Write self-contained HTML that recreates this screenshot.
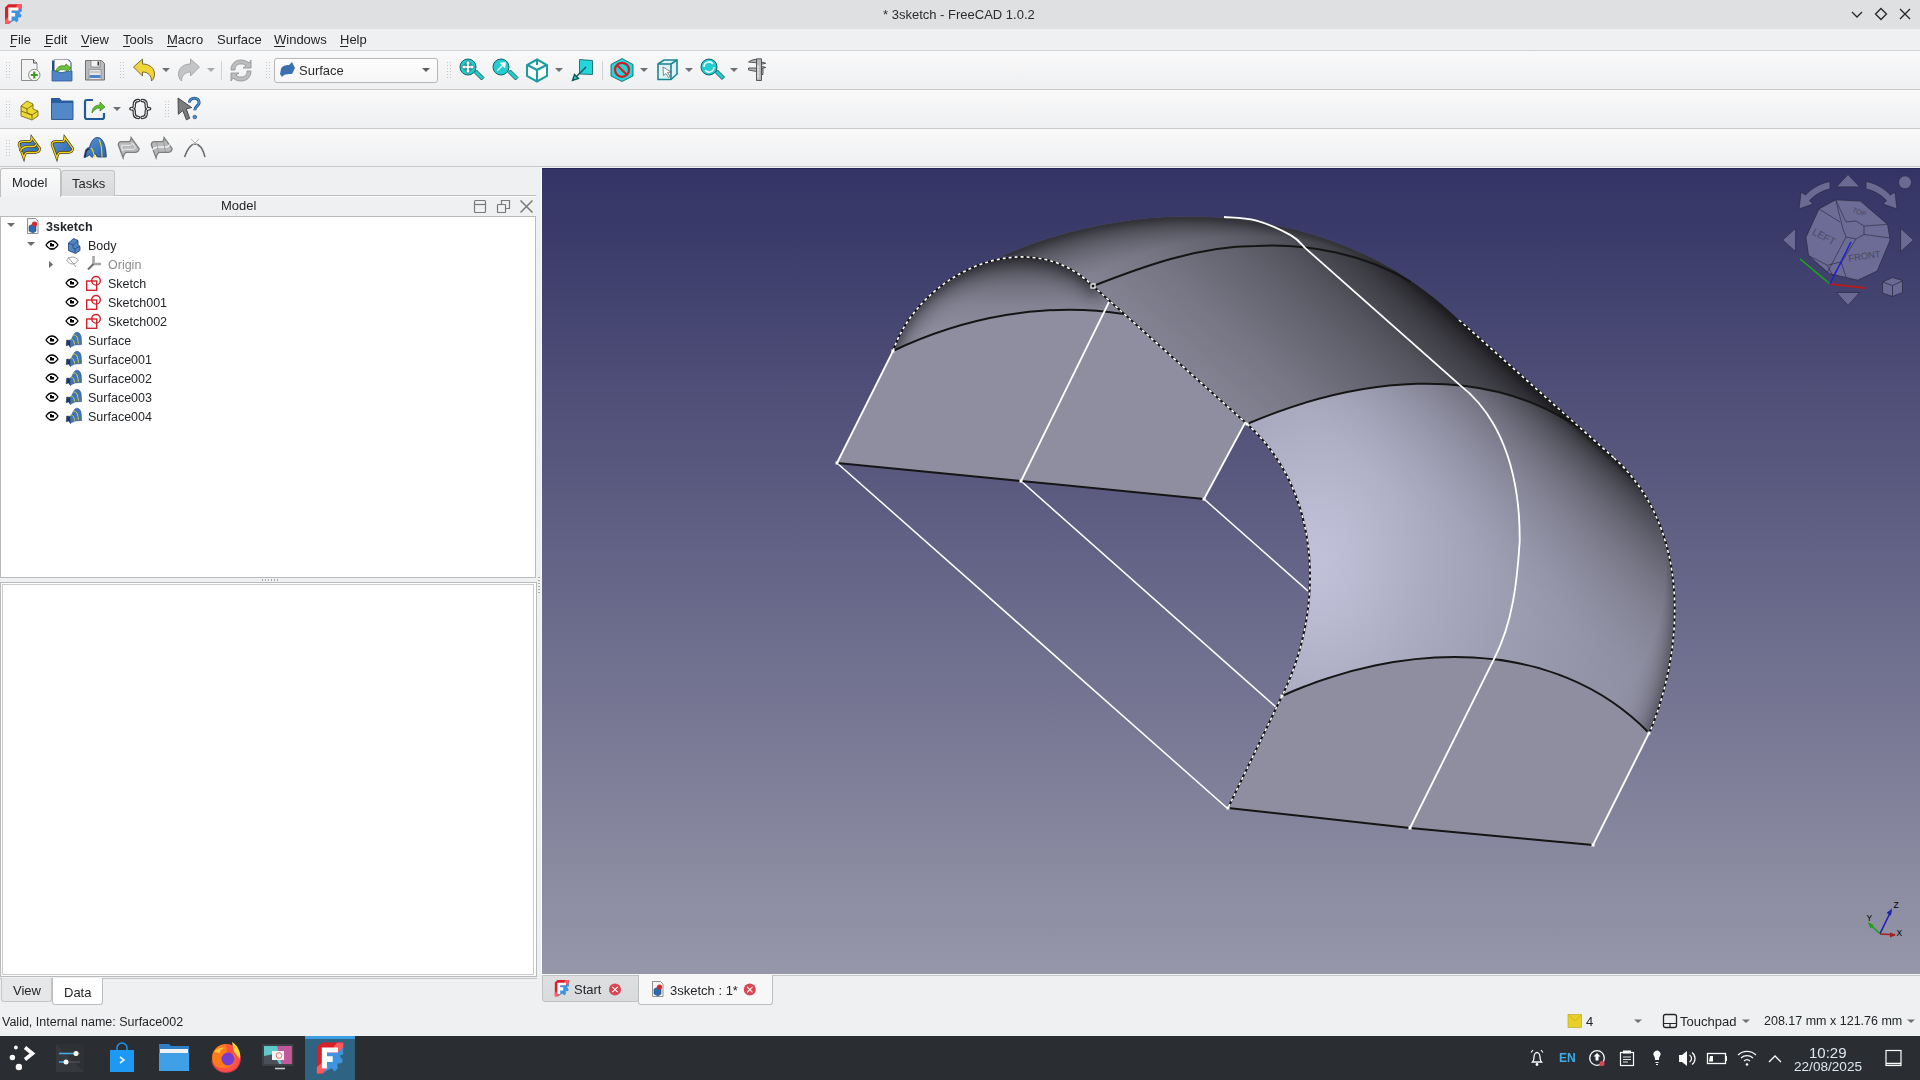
<!DOCTYPE html>
<html><head><meta charset="utf-8">
<style>
*{box-sizing:border-box;margin:0;padding:0}
html,body{width:1920px;height:1080px;overflow:hidden;background:#eff0f1;font-family:"Liberation Sans",sans-serif;font-size:13px;color:#232629}
.a{position:absolute}
.t{position:absolute;white-space:pre;line-height:13px;font-size:13px;will-change:transform}
svg{position:absolute;overflow:visible}
.tb{position:absolute;left:0;width:1920px;background:linear-gradient(#f9f9fa,#eff0f1)}
.hd{position:absolute;width:6px;height:17px;background-image:radial-gradient(circle at 1px 1px,#c6c8ca 0.55px,transparent 0.8px);background-size:3px 3px}
.dd{position:absolute;width:0;height:0;border-left:4px solid transparent;border-right:4px solid transparent;border-top:4px solid #6e7072}
</style></head><body>
<!-- title bar -->
<div class="a" style="left:0;top:0;width:1920px;height:29px;background:#dfe0e2"></div>
<svg width="0" height="0" style="position:absolute"><defs><symbol id="fc" viewBox="0 0 28 32">
 <path d="M0 5.2L5.4 0H27.7V5.3L6.4 32H0z" fill="#d81f2a"/>
 <path d="M17.6 4.7L21.4 0H27.7V5.3L22.1 10z" fill="#ff5a5e"/>
 <path d="M0 25.7L5.4 21V27H10.3L6.4 32H0z" fill="#ff5a5e"/>
 <path d="M10.8 10.3H22.1L27.7 5.2V12L23.8 13.7L27.2 18L26.2 21.3L21.4 22L22.1 26.7L18.6 30L15.8 26.7L12 28.3L6.4 32L10.3 27z" fill="#3d95e0"/>
 <path d="M5.4 5.2H22.1V10.3H10.8V14.3H16.7V20.2H10.8V27H5.4z" fill="#fff"/>
</symbol></defs></svg>
<svg style="left:5px;top:4px" width="17" height="20"><use href="#fc" width="17" height="20"/></svg>
<div class="t" style="left:883px;top:8px;color:#2a2c2e">* 3sketch - FreeCAD 1.0.2</div>
<svg style="left:1850px;top:9px" width="14" height="10"><path d="M2 3l5 5 5-5" stroke="#232629" stroke-width="1.3" fill="none"/></svg>
<svg style="left:1874px;top:7px" width="14" height="14"><path d="M7 1.5l5.5 5.5-5.5 5.5-5.5-5.5z" stroke="#232629" stroke-width="1.3" fill="none"/></svg>
<svg style="left:1898px;top:7px" width="14" height="14"><path d="M2 2l10 10M12 2l-10 10" stroke="#232629" stroke-width="1.3" fill="none"/></svg>
<!-- menu -->
<div class="a" style="left:0;top:29px;width:1920px;height:21px;background:#eff0f1"></div>
<div class="t" style="left:10px;top:33px">File</div>
<div class="t" style="left:45px;top:33px">Edit</div>
<div class="t" style="left:81px;top:33px">View</div>
<div class="t" style="left:123px;top:33px">Tools</div>
<div class="t" style="left:167px;top:33px">Macro</div>
<div class="t" style="left:217px;top:33px">Surface</div>
<div class="t" style="left:274px;top:33px">Windows</div>
<div class="t" style="left:340px;top:33px">Help</div>
<div class="a" style="left:10px;top:46px;width:6px;height:1px;background:#232629"></div>
<div class="a" style="left:44px;top:46px;width:7px;height:1px;background:#232629"></div>
<div class="a" style="left:81px;top:46px;width:8px;height:1px;background:#232629"></div>
<div class="a" style="left:123px;top:46px;width:7px;height:1px;background:#232629"></div>
<div class="a" style="left:167px;top:46px;width:10px;height:1px;background:#232629"></div>
<div class="a" style="left:274px;top:46px;width:11px;height:1px;background:#232629"></div>
<div class="a" style="left:340px;top:46px;width:8px;height:1px;background:#232629"></div>
<!-- toolbars -->
<div class="a" style="left:0;top:50px;width:1920px;height:1px;background:#d1d2d4"></div>
<div class="tb" style="top:51px;height:38px"></div>
<div class="a" style="left:0;top:89px;width:1920px;height:1px;background:#c8c9cb"></div>
<div class="tb" style="top:90px;height:38px"></div>
<div class="a" style="left:0;top:128px;width:1920px;height:1px;background:#c8c9cb"></div>
<div class="tb" style="top:129px;height:37px"></div>
<div class="a" style="left:0;top:166px;width:1920px;height:1px;background:#c8c9cb"></div>
<!-- toolbar handles -->
<svg style="left:0;top:0" width="480" height="170"><g fill="#c3c5c7"><rect x="6" y="62" width="1" height="1"/><rect x="9" y="62" width="1" height="1"/><rect x="6" y="65" width="1" height="1"/><rect x="9" y="65" width="1" height="1"/><rect x="6" y="68" width="1" height="1"/><rect x="9" y="68" width="1" height="1"/><rect x="6" y="71" width="1" height="1"/><rect x="9" y="71" width="1" height="1"/><rect x="6" y="74" width="1" height="1"/><rect x="9" y="74" width="1" height="1"/><rect x="6" y="77" width="1" height="1"/><rect x="9" y="77" width="1" height="1"/><rect x="120" y="62" width="1" height="1"/><rect x="123" y="62" width="1" height="1"/><rect x="120" y="65" width="1" height="1"/><rect x="123" y="65" width="1" height="1"/><rect x="120" y="68" width="1" height="1"/><rect x="123" y="68" width="1" height="1"/><rect x="120" y="71" width="1" height="1"/><rect x="123" y="71" width="1" height="1"/><rect x="120" y="74" width="1" height="1"/><rect x="123" y="74" width="1" height="1"/><rect x="120" y="77" width="1" height="1"/><rect x="123" y="77" width="1" height="1"/><rect x="266" y="62" width="1" height="1"/><rect x="269" y="62" width="1" height="1"/><rect x="266" y="65" width="1" height="1"/><rect x="269" y="65" width="1" height="1"/><rect x="266" y="68" width="1" height="1"/><rect x="269" y="68" width="1" height="1"/><rect x="266" y="71" width="1" height="1"/><rect x="269" y="71" width="1" height="1"/><rect x="266" y="74" width="1" height="1"/><rect x="269" y="74" width="1" height="1"/><rect x="266" y="77" width="1" height="1"/><rect x="269" y="77" width="1" height="1"/><rect x="447" y="62" width="1" height="1"/><rect x="450" y="62" width="1" height="1"/><rect x="447" y="65" width="1" height="1"/><rect x="450" y="65" width="1" height="1"/><rect x="447" y="68" width="1" height="1"/><rect x="450" y="68" width="1" height="1"/><rect x="447" y="71" width="1" height="1"/><rect x="450" y="71" width="1" height="1"/><rect x="447" y="74" width="1" height="1"/><rect x="450" y="74" width="1" height="1"/><rect x="447" y="77" width="1" height="1"/><rect x="450" y="77" width="1" height="1"/><rect x="6" y="101" width="1" height="1"/><rect x="9" y="101" width="1" height="1"/><rect x="6" y="104" width="1" height="1"/><rect x="9" y="104" width="1" height="1"/><rect x="6" y="107" width="1" height="1"/><rect x="9" y="107" width="1" height="1"/><rect x="6" y="110" width="1" height="1"/><rect x="9" y="110" width="1" height="1"/><rect x="6" y="113" width="1" height="1"/><rect x="9" y="113" width="1" height="1"/><rect x="6" y="116" width="1" height="1"/><rect x="9" y="116" width="1" height="1"/><rect x="165" y="101" width="1" height="1"/><rect x="168" y="101" width="1" height="1"/><rect x="165" y="104" width="1" height="1"/><rect x="168" y="104" width="1" height="1"/><rect x="165" y="107" width="1" height="1"/><rect x="168" y="107" width="1" height="1"/><rect x="165" y="110" width="1" height="1"/><rect x="168" y="110" width="1" height="1"/><rect x="165" y="113" width="1" height="1"/><rect x="168" y="113" width="1" height="1"/><rect x="165" y="116" width="1" height="1"/><rect x="168" y="116" width="1" height="1"/><rect x="6" y="140" width="1" height="1"/><rect x="9" y="140" width="1" height="1"/><rect x="6" y="143" width="1" height="1"/><rect x="9" y="143" width="1" height="1"/><rect x="6" y="146" width="1" height="1"/><rect x="9" y="146" width="1" height="1"/><rect x="6" y="149" width="1" height="1"/><rect x="9" y="149" width="1" height="1"/><rect x="6" y="152" width="1" height="1"/><rect x="9" y="152" width="1" height="1"/><rect x="6" y="155" width="1" height="1"/><rect x="9" y="155" width="1" height="1"/></g></svg>
<div class="dd" style="left:162px;top:68px"></div>
<div class="dd" style="left:207px;top:68px;border-top-color:#a9abad"></div>
<div class="dd" style="left:555px;top:68px"></div>
<div class="dd" style="left:640px;top:68px"></div>
<div class="dd" style="left:685px;top:68px"></div>
<div class="dd" style="left:730px;top:68px"></div>
<div class="dd" style="left:113px;top:107px"></div>
<div class="a" style="left:221px;top:61px;width:1px;height:19px;background:#d0d1d3"></div>
<div class="a" style="left:602px;top:61px;width:1px;height:19px;background:#d0d1d3"></div>
<!-- combo -->
<div class="a" style="left:274px;top:58px;width:164px;height:25px;border:1px solid #b4b6b8;border-radius:3px;background:linear-gradient(#fdfdfd,#f6f6f7)"></div>
<div class="t" style="left:299px;top:64px;color:#2a2c2e">Surface</div>
<div class="dd" style="left:422px;top:68px;border-left-width:4px;border-right-width:4px;border-top-width:4.5px;border-top-color:#5c5e60"></div>
<svg style="left:0;top:0" width="1920" height="170">
 <!-- combo icon -->
 <path d="M281 69c1-3 4-4 8-4l3-3 3 6-3 6c-3 0-6 0-8 1l-2 2-2-3z" fill="#3a6fb0"/>
 <!-- new -->
 <path d="M21.5 59.5h12l3.5 3.5v17.5h-15.5z" fill="#f3f3f3" stroke="#8a8c8e"/>
 <path d="M33.5 59.5v3.5h3.5" fill="#ddd" stroke="#555"/>
 <circle cx="34.3" cy="75" r="5.7" fill="#fafafa" stroke="#8a8c8e"/>
 <path d="M34.3 71.5v7M30.8 75h7" stroke="#3d9b20" stroke-width="2.2"/>
 <!-- open -->
 <path d="M52 60.5h2v-1h15l2.5 3v17.5h-19.5z" fill="#1f4f8c"/>
 <path d="M54.5 59.5h13l3 3v10h-16z" fill="#f8f8f8" stroke="#999" stroke-width=".7"/>
 <path d="M52 70.5c4 0 6 1 9 2.5 3-1 7-2 11-2v10h-20z" fill="#4f84c6" stroke="#2b5a98" stroke-width=".8"/>
 <path d="M56 71c1-4 4-6 9-5l1-2 5 4-4 4-1-2c-4-1-7 0-10 2z" fill="#6bc13a" stroke="#2d6a12" stroke-width=".6"/>
 <!-- save -->
 <path d="M85.5 60.5h16l3 3v16.5h-19z" fill="#b8babc" stroke="#6f7173"/>
 <rect x="91" y="60.5" width="9" height="6.5" fill="#f2f2f2" stroke="#777" stroke-width=".7"/>
 <rect x="97.5" y="61.5" width="1.5" height="4" fill="#333"/>
 <rect x="89" y="69.5" width="12" height="10" fill="#e6e6e6" stroke="#888" stroke-width=".7"/>
 <rect x="89.5" y="75" width="11" height="3" fill="#4b84c8"/>
 <path d="M90 72h10" stroke="#aaa"/>
 <!-- undo -->
 <path d="M133.5 67l9-8v5c7 0 12 4 12 10 0 3-1 5-3 7 0-5-3-9-9-9v4z" fill="#f0d43a" stroke="#5a5020" stroke-width=".8"/>
 <!-- redo -->
 <path d="M199.5 67l-9-8v5c-7 0-12 4-12 10 0 3 1 5 3 7 0-5 3-9 9-9v4z" fill="#c4c5c6" stroke="#9a9b9c" stroke-width=".8"/>
 <!-- refresh -->
 <path d="M231 70c0-6 4-10 10-10 3 0 6 1 8 3l2-3v8h-8l3-2c-1-2-3-2-5-2-4 0-6 2-6 6z" fill="#bcbdbe" stroke="#8e8f90" stroke-width=".8"/>
 <path d="M251 71c0 6-4 10-10 10-3 0-6-1-8-3l-2 3v-8h8l-3 2c1 2 3 2 5 2 4 0 6-2 6-6z" fill="#bcbdbe" stroke="#8e8f90" stroke-width=".8"/>
 <!-- zoom fit -->
 <g stroke="#0e5558" stroke-width=".9">
 <path d="M474 72.5l7.5 7.5 2.5-2.5-7.5-7.5z" fill="#22cdd2"/>
 <circle cx="468" cy="67" r="8" fill="#22cdd2"/>
 <path d="M468 60.5l2.8 3.2h-1.6v2.1h2.1v-1.6l3.2 2.8-3.2 2.8v-1.6h-2.1v2.1h1.6l-2.8 3.2-2.8-3.2h1.6v-2.1h-2.1v1.6l-3.2-2.8 3.2-2.8v1.6h2.1v-2.1h-1.6z" fill="#fff" stroke="#0e5558" stroke-width=".6"/>
 <path d="M508 72.5l7.5 7.5 2.5-2.5-7.5-7.5z" fill="#22cdd2"/>
 <circle cx="501" cy="67" r="8" fill="#22cdd2"/>
 <path d="M497 71l7-7M505 63l-4 .3 3.7 3.7z" stroke="#fff" stroke-width="1.3" fill="#fff"/>
 </g>
 <!-- iso cube -->
 <path d="M537 59.5l10 5.5v11l-10 5.5-10-5.5v-11z" fill="#fff" stroke="#1a9ca2" stroke-width="2"/>
 <path d="M527.5 65l9.5 5 9.5-5M537 70v11M537 61v4" stroke="#1a9ca2" stroke-width="2" fill="none"/>
 <!-- std view -->
 <path d="M579.5 59.5l13 1v14l-13-.5z" fill="#22d6dc" stroke="#0e5558" stroke-width=".8"/>
 <path d="M586 67l-9 9M572.5 80.5l2-6 4 4z" stroke="#0e5558" stroke-width="1.4" fill="#22d6dc"/>
 <!-- draw style -->
 <path d="M622 58.5l11 6v11.5l-11 5.5-11-5.5v-11.5z" fill="#22d6dc" stroke="#0e5558" stroke-width=".8"/>
 <circle cx="622" cy="69.8" r="7" fill="none" stroke="#d21e26" stroke-width="2.2"/>
 <path d="M617 65l10 10" stroke="#d21e26" stroke-width="2.2"/>
 <!-- box select -->
 <path d="M658 64l6-4h13v14l-6 5.5h-13z" fill="#dff3f6" stroke="#18878d" stroke-width="1.6"/>
 <path d="M658 64h13v15.5M671 64l6-4" stroke="#18878d" stroke-width="1.6" fill="none"/>
 <path d="M663 67l8 5-3.5.5 2.5 4-1.5 1-2.5-4-2.5 2z" fill="#fff" stroke="#555" stroke-width=".7"/>
 <!-- sync zoom -->
 <g stroke="#0e5558" stroke-width=".9">
 <path d="M715 72.5l7 7 2.5-2.5-7-7z" fill="#22cdd2"/>
 <circle cx="709" cy="67" r="8" fill="#22cdd2"/>
 </g>
 <path d="M704 67a5 5 0 0 1 9-3M714 67a5 5 0 0 1-9 3" stroke="#e8ffff" stroke-width="1.6" fill="none"/>
 <!-- caliper -->
 <g fill="#b4b5b6" stroke="#4a4b4c" stroke-width=".9" stroke-linejoin="round">
  <path d="M756.5 58.8h5v21.7h-5z"/>
  <path d="M756.5 59.3C753 59.5 750.5 60.5 748.5 62L756.5 62.8z"/>
  <path d="M748.5 68H756.5V71.5L748.5 70z"/>
  <path d="M761.5 62L765.8 63.2L761.5 64.3zM761.5 66.3L765.8 67.5L761.5 68.5z"/>
  <path d="M761.5 68.5h1.5v6h-1.5z"/>
 </g>
 <path d="M758 65v14M757.5 67h2M757.5 70h2M757.5 73h2M757.5 76h2" stroke="#f4f4f4" stroke-width=".8"/>
 <!-- row2: part -->
 <path d="M21 106l6-5 6 3v5l5 2v5l-6 4-11-4z" fill="#ecd936" stroke="#6b5d10" stroke-width=".8"/>
 <path d="M21 106l6 3 6-4M27 109v4l5 2 6-4M21 111l11 4v4" stroke="#6b5d10" stroke-width=".8" fill="none"/>
 <!-- folder -->
 <path d="M51.5 98.5h8l2 2.5h11.5v18.5h-21.5z" fill="#5388c8" stroke="#23508c" stroke-width=".9"/>
 <path d="M51.5 98.5h8l2 2.5h11.5v2h-21.5z" fill="#2b5d9e"/>
 <!-- export -->
 <path d="M93 100h-6a2 2 0 0 0-2 2v15a2 2 0 0 0 2 2h15a2 2 0 0 0 2-2v-4" stroke="#1f5a9a" stroke-width="2.2" fill="none"/>
 <path d="M92 113c0-5 3-8 8-8v-3l5 5-5 4v-3c-4 0-6 2-8 5z" fill="#5cc02f" stroke="#2b6a10" stroke-width=".6"/>
 <!-- braces -->
 <g fill="none" stroke-linecap="round" stroke-linejoin="round">
 <path d="M138.5 100.5C135.5 100.5 134.3 102 134.3 104.5V106C134.3 107.9 133.3 108.8 130.8 108.8C133.3 108.8 134.3 109.7 134.3 111.6V113.5C134.3 116 135.5 117.5 138.5 117.5M142 100.5C145 100.5 146.2 102 146.2 104.5V106C146.2 107.9 147.2 108.8 149.7 108.8C147.2 108.8 146.2 109.7 146.2 111.6V113.5C146.2 116 145 117.5 142 117.5" stroke="#35383b" stroke-width="3.4"/>
 <path d="M138.5 100.5C135.5 100.5 134.3 102 134.3 104.5V106C134.3 107.9 133.3 108.8 130.8 108.8C133.3 108.8 134.3 109.7 134.3 111.6V113.5C134.3 116 135.5 117.5 138.5 117.5M142 100.5C145 100.5 146.2 102 146.2 104.5V106C146.2 107.9 147.2 108.8 149.7 108.8C147.2 108.8 146.2 109.7 146.2 111.6V113.5C146.2 116 145 117.5 142 117.5" stroke="#fff" stroke-width="1"/>
 </g>
 <!-- whats this -->
 <path d="M178 98l13.7 9.6-5.5 1.2 3.5 9.5-3.3 1.5-3.6-9.3-4.4 3.8z" fill="#7c7d7e" stroke="#3a3b3c" stroke-width=".9"/>
 <path d="M189.5 102.5c0-2.5 2-4.3 4.8-4.3s4.8 1.8 4.8 4.5c0 3.2-4.3 3.5-4.3 7.5" stroke="#24486e" stroke-width="3" fill="none"/><path d="M189.5 102.5c0-2.5 2-4.3 4.8-4.3s4.8 1.8 4.8 4.5c0 3.2-4.3 3.5-4.3 7.5" stroke="#4a8fd6" stroke-width="1.6" fill="none"/>
 <circle cx="194.8" cy="117" r="1.8" fill="#4a8fd6" stroke="#24486e" stroke-width=".7"/>
 <!-- row3 -->
 <defs><path id="flg" d="M0.8 7.8C0.8 5.3 2 4.6 4.2 4.6H11.3C12.8 4.6 13.4 3.3 13.6 0.6L21.6 11.6C21.2 14 19.8 15.4 17.4 15.4H9.4C7.6 15.4 6.4 17 5.6 20.8Z"/>
 <linearGradient id="fblue" x1="0" y1="0" x2="1" y2="1"><stop offset="0" stop-color="#5a93d6"/><stop offset="1" stop-color="#2c62a8"/></linearGradient></defs>
 <g transform="translate(18.2 137)"><use href="#flg" fill="url(#fblue)" stroke="#3b3510" stroke-width="2.6"/><use href="#flg" fill="none" stroke="#f0d21e" stroke-width="1.4"/>
 <path d="M2.2 14.5C3.5 10.5 6 9.5 10 9.5H15C17 9.5 18 8 18.5 6.5" fill="none" stroke="#3b3510" stroke-width="2.6"/><path d="M2.2 14.5C3.5 10.5 6 9.5 10 9.5H15C17 9.5 18 8 18.5 6.5" fill="none" stroke="#f0d21e" stroke-width="1.3"/></g>
 <g transform="translate(51.2 137)"><use href="#flg" fill="url(#fblue)" stroke="#3b3510" stroke-width="2.6"/><use href="#flg" fill="none" stroke="#f0d21e" stroke-width="1.4"/></g>
 <path d="M84 157.5l1.5-7c.8-2 2.3-3 4-3 1.5-6 4-10 8-10 5 0 8.5 7 8.8 19.5h-9l-2.5-4-2.5 4.5-2.8-2.5-2.5 1.5z" fill="url(#fblue)" stroke="#1c3a66" stroke-width=".8"/>
 <path d="M91 148c2 2 3 5 3.3 9.5M99 139.5c2.2 4 3 10 3 17.5" stroke="#f0d21e" stroke-width="1.1" fill="none"/>
 <path d="M85 157.3l1.3-6.5c1-1.5 2-2 3.3-2" stroke="#14284a" stroke-width="1.2" fill="none"/>
 <g transform="translate(117.5 137)"><use href="#flg" fill="#b9babb" stroke="#7d7e7f" stroke-width="1.3"/><path d="M4 8.3H12C13.5 8.3 14.5 7 15 6L18 10.5C17.5 11.8 16.5 12.3 15 12.3H8C6.5 12.3 5.5 13 5 14z" fill="none" stroke="#eeeeee" stroke-width="1"/></g>
 <g transform="translate(150.5 137)"><use href="#flg" fill="#b9babb" stroke="#7d7e7f" stroke-width="1.3"/><path d="M2 13C3.5 10.5 5.5 10 9 10H16C17.5 10 18.5 9 19 7.5" fill="none" stroke="#f2f2f2" stroke-width="1.3"/><path d="M6 4.6L8 15.4M13 3.5L15 15.4" stroke="#8a8b8c" stroke-width=".7"/></g>
 <path d="M184.5 157c3-8 6-13 10.5-13s8 5 10 13" stroke="#6a6b6c" stroke-width="1.6" fill="none"/>
 <path d="M191 139l8 8M199 139l-8 8" stroke="#b8b9ba" stroke-width="1"/>
</svg>
<!-- left panel -->
<div class="a" style="left:0;top:167px;width:541px;height:838px;background:#eff0f1"></div>
<div class="a" style="left:541px;top:167px;width:1px;height:808px;background:#fcfcfc"></div>
<div class="a" style="left:0;top:195px;width:536px;height:1px;background:#bfc1c3"></div>
<div class="a" style="left:0;top:196px;width:536px;height:1px;background:#fbfbfb"></div>
<div class="a" style="left:61px;top:170px;width:54px;height:26px;background:linear-gradient(#e3e4e6,#d9dadc);border:1px solid #c2c4c6;border-bottom:none;border-radius:3px 3px 0 0"></div>
<div class="a" style="left:0px;top:168px;width:61px;height:29px;background:linear-gradient(#fafafa,#f1f2f3);border:1px solid #bdbfc1;border-bottom:none;border-radius:3px 3px 0 0"></div>
<div class="t" style="left:12px;top:176px">Model</div>
<div class="t" style="left:72px;top:177px">Tasks</div>
<div class="t" style="left:221px;top:199px">Model</div>
<svg style="left:0;top:0" width="541" height="440">
 <rect x="474.5" y="200.5" width="11" height="12" rx="1" fill="none" stroke="#77797b" stroke-width="1.2"/>
 <path d="M474.5 204.5h11" stroke="#77797b" stroke-width="1.2"/>
 <rect x="497.5" y="204.5" width="8" height="8" rx=".5" fill="none" stroke="#77797b" stroke-width="1.2"/>
 <path d="M501.5 204.5v-4h8v8h-4" fill="none" stroke="#77797b" stroke-width="1.2"/>
 <path d="M520.5 200.5l12 12M532.5 200.5l-12 12" stroke="#77797b" stroke-width="1.5"/>
</svg>
<!-- tree box -->
<div class="a" style="left:0;top:216px;width:536px;height:362px;background:#fff;border:1px solid #b8babc"></div>
<!-- splitter dots -->
<div class="a" style="left:261px;top:579px;width:17px;height:2px;background-image:radial-gradient(circle,#a8aaac .8px,transparent 1px);background-size:3px 2px"></div>
<div class="a" style="left:538px;top:576px;width:2px;height:17px;background-image:radial-gradient(circle,#a8aaac .8px,transparent 1px);background-size:2px 3px"></div>
<!-- property box -->
<div class="a" style="left:0;top:582px;width:537px;height:395px;background:#fff;border:1px solid #b8babc"></div>
<div class="a" style="left:2px;top:584px;width:532px;height:391px;border:1px solid #c9cbcd"></div>
<div class="a" style="left:0;top:978px;width:537px;height:1px;background:#bfc1c3"></div>
<div class="a" style="left:1px;top:978px;width:51px;height:24px;background:#e6e7e9;border:1px solid #c2c4c6;border-top:none;border-radius:0 0 3px 3px"></div>
<div class="a" style="left:52px;top:978px;width:51px;height:27px;background:#fff;border:1px solid #bdbfc1;border-top:none;border-radius:0 0 3px 3px"></div>
<div class="t" style="left:13px;top:984px">View</div>
<div class="t" style="left:64px;top:986px">Data</div>
<!-- tree rows -->
<div class="t" style="left:46px;top:221px;font-weight:700;font-size:12.5px">3sketch</div>
<div class="t" style="left:88px;top:240px;font-size:12.5px">Body</div>
<div class="t" style="left:108px;top:259px;font-size:12.5px;color:#8c8e90">Origin</div>
<div class="t" style="left:108px;top:278px;font-size:12.5px">Sketch</div>
<div class="t" style="left:108px;top:297px;font-size:12.5px">Sketch001</div>
<div class="t" style="left:108px;top:316px;font-size:12.5px">Sketch002</div>
<div class="t" style="left:88px;top:335px;font-size:12.5px">Surface</div>
<div class="t" style="left:88px;top:354px;font-size:12.5px">Surface001</div>
<div class="t" style="left:88px;top:373px;font-size:12.5px">Surface002</div>
<div class="t" style="left:88px;top:392px;font-size:12.5px">Surface003</div>
<div class="t" style="left:88px;top:411px;font-size:12.5px">Surface004</div>
<svg style="left:0;top:0" width="541" height="440">
 <defs>
  <g id="eye"><path d="M0 4c2-3 4-4 6-4s4 1 6 4c-2 3-4 4-6 4s-4-1-6-4z" fill="none" stroke="#000" stroke-width="1.3"/><path d="M4 5.5h4v-2.5h-2v-1h-2z" fill="#000"/><path d="M3.5 8h5" stroke="#000"/></g>
  <g id="sk"><rect x=".7" y="5" width="10" height="9.3" fill="none" stroke="#d3222b" stroke-width="1.4"/><circle cx="10" cy="4.8" r="4.3" fill="none" stroke="#d3222b" stroke-width="1.4"/></g>
  <g id="sf"><path d="M0.2 13.7L0.7 8L4.2 8.4L4.4 15.4L2.7 12.9Z" fill="#1c3a68" stroke="#14284a" stroke-width=".5"/><path d="M4.2 8.4C4.6 7.2 5.2 6.8 5.8 6.8C6.8 4 8.5 0.2 10.7 0.2C13 0.2 14.8 2 15.2 5.2L15.6 12.5L9 12.9L5.6 14.6L4.4 15.4Z" fill="#3f76ba" stroke="#22427a" stroke-width=".5"/><path d="M4.8 7.2C6 7 7 7.6 7.6 8.8L8.7 12.6M7.2 3.1C8.8 2.8 10.2 3.4 11 5L11.9 8.4L12.5 11.7" stroke="#e3cc2c" stroke-width="1" fill="none"/></g>
 </defs>
 <path d="M7 223l4 4 4-4z" fill="#6a6c6e"/>
 <path d="M27 242l4 4 4-4z" fill="#6a6c6e"/>
 <path d="M49 261v7l4-3.5z" fill="#6a6c6e"/>
 <!-- doc icon -->
 <path d="M27.5 218.5h8l2.5 2.5v12.5h-10.5z" fill="#f5f5f5" stroke="#777" stroke-width=".8"/>
 <path d="M29 226l4-2 3 2v5l-3 2-4-2z" fill="#2f6ab0" stroke="#183a66" stroke-width=".5"/>
 <circle cx="34.5" cy="224" r="2.6" fill="#d42a2a"/>
 <!-- body -->
 <path d="M68.5 243l5-4.5 4.5 2v4.5l2 1.5v4l-4.5 3-7-3z" fill="#4f86c6" stroke="#1e3f70" stroke-width=".8"/>
 <path d="M68.5 243l4.5 2 5-4M73 245v3l2 1 5-3M75 249v3.5" stroke="#1e3f70" stroke-width=".7" fill="none"/>
 <use href="#eye" x="46" y="241"/>
 <!-- origin -->
 <g opacity=".55"><path d="M66.5 260c2-2 4-3 6-3s4 1 6 3c-2 3-4 4-6 4s-4-1-6-4z" fill="none" stroke="#555" stroke-width="1"/><path d="M68 257l8 10" stroke="#555"/></g>
 <path d="M93.5 256v8h7.5" stroke="#a5a7a9" stroke-width="2.6" fill="none"/>
 <path d="M93.5 264l-5.5 5.5" stroke="#6e7072" stroke-width="2.2"/>
 <use href="#eye" x="66" y="279"/>
 <use href="#eye" x="66" y="298"/>
 <use href="#eye" x="66" y="317"/>
 <use href="#sk" x="86" y="276"/>
 <use href="#sk" x="86" y="295"/>
 <use href="#sk" x="86" y="314"/>
 <use href="#eye" x="46" y="336"/>
 <use href="#eye" x="46" y="355"/>
 <use href="#eye" x="46" y="374"/>
 <use href="#eye" x="46" y="393"/>
 <use href="#eye" x="46" y="412"/>
 <use href="#sf" x="66" y="332"/>
 <use href="#sf" x="66" y="351"/>
 <use href="#sf" x="66" y="370"/>
 <use href="#sf" x="66" y="389"/>
 <use href="#sf" x="66" y="408"/>
</svg>
<!-- 3D view -->
<svg style="left:542px;top:168px" width="1378" height="806" viewBox="542 168 1378 806">
<defs>
 <linearGradient id="bg" x1="0" y1="168" x2="0" y2="975" gradientUnits="userSpaceOnUse"><stop offset="0" stop-color="#333365"/><stop offset="1" stop-color="#9797aa"/></linearGradient>
 <filter id="bl3" filterUnits="userSpaceOnUse" x="542" y="168" width="1378" height="807"><feGaussianBlur stdDeviation="3"/></filter>
 <linearGradient id="gDiag" x1="1246.2" y1="559.0" x2="1459.0" y2="320.0" gradientUnits="userSpaceOnUse"><stop offset="0.0000" stop-color="#000" stop-opacity="0.000"/><stop offset="0.0156" stop-color="#000" stop-opacity="0.000"/><stop offset="0.0312" stop-color="#000" stop-opacity="0.000"/><stop offset="0.0469" stop-color="#000" stop-opacity="0.000"/><stop offset="0.0625" stop-color="#000" stop-opacity="0.000"/><stop offset="0.0781" stop-color="#000" stop-opacity="0.006"/><stop offset="0.0938" stop-color="#000" stop-opacity="0.012"/><stop offset="0.1094" stop-color="#000" stop-opacity="0.019"/><stop offset="0.1250" stop-color="#000" stop-opacity="0.025"/><stop offset="0.1406" stop-color="#000" stop-opacity="0.031"/><stop offset="0.1562" stop-color="#000" stop-opacity="0.038"/><stop offset="0.1719" stop-color="#000" stop-opacity="0.044"/><stop offset="0.1875" stop-color="#000" stop-opacity="0.050"/><stop offset="0.2031" stop-color="#000" stop-opacity="0.057"/><stop offset="0.2188" stop-color="#000" stop-opacity="0.064"/><stop offset="0.2344" stop-color="#000" stop-opacity="0.071"/><stop offset="0.2500" stop-color="#000" stop-opacity="0.078"/><stop offset="0.2656" stop-color="#000" stop-opacity="0.085"/><stop offset="0.2812" stop-color="#000" stop-opacity="0.092"/><stop offset="0.2969" stop-color="#000" stop-opacity="0.098"/><stop offset="0.3125" stop-color="#000" stop-opacity="0.105"/><stop offset="0.3281" stop-color="#000" stop-opacity="0.112"/><stop offset="0.3438" stop-color="#000" stop-opacity="0.119"/><stop offset="0.3594" stop-color="#000" stop-opacity="0.126"/><stop offset="0.3750" stop-color="#000" stop-opacity="0.133"/><stop offset="0.3906" stop-color="#000" stop-opacity="0.140"/><stop offset="0.4062" stop-color="#000" stop-opacity="0.147"/><stop offset="0.4219" stop-color="#000" stop-opacity="0.154"/><stop offset="0.4375" stop-color="#000" stop-opacity="0.161"/><stop offset="0.4531" stop-color="#000" stop-opacity="0.169"/><stop offset="0.4688" stop-color="#000" stop-opacity="0.176"/><stop offset="0.4844" stop-color="#000" stop-opacity="0.183"/><stop offset="0.5000" stop-color="#000" stop-opacity="0.190"/><stop offset="0.5156" stop-color="#000" stop-opacity="0.201"/><stop offset="0.5312" stop-color="#000" stop-opacity="0.212"/><stop offset="0.5469" stop-color="#000" stop-opacity="0.223"/><stop offset="0.5625" stop-color="#000" stop-opacity="0.234"/><stop offset="0.5781" stop-color="#000" stop-opacity="0.245"/><stop offset="0.5938" stop-color="#000" stop-opacity="0.256"/><stop offset="0.6094" stop-color="#000" stop-opacity="0.267"/><stop offset="0.6250" stop-color="#000" stop-opacity="0.277"/><stop offset="0.6406" stop-color="#000" stop-opacity="0.288"/><stop offset="0.6562" stop-color="#000" stop-opacity="0.299"/><stop offset="0.6719" stop-color="#000" stop-opacity="0.310"/><stop offset="0.6875" stop-color="#000" stop-opacity="0.321"/><stop offset="0.7031" stop-color="#000" stop-opacity="0.333"/><stop offset="0.7188" stop-color="#000" stop-opacity="0.347"/><stop offset="0.7344" stop-color="#000" stop-opacity="0.361"/><stop offset="0.7500" stop-color="#000" stop-opacity="0.375"/><stop offset="0.7656" stop-color="#000" stop-opacity="0.389"/><stop offset="0.7812" stop-color="#000" stop-opacity="0.403"/><stop offset="0.7969" stop-color="#000" stop-opacity="0.417"/><stop offset="0.8125" stop-color="#000" stop-opacity="0.437"/><stop offset="0.8281" stop-color="#000" stop-opacity="0.458"/><stop offset="0.8438" stop-color="#000" stop-opacity="0.479"/><stop offset="0.8594" stop-color="#000" stop-opacity="0.500"/><stop offset="0.8750" stop-color="#000" stop-opacity="0.521"/><stop offset="0.8906" stop-color="#000" stop-opacity="0.542"/><stop offset="0.9062" stop-color="#000" stop-opacity="0.563"/><stop offset="0.9219" stop-color="#000" stop-opacity="0.588"/><stop offset="0.9375" stop-color="#000" stop-opacity="0.625"/><stop offset="0.9531" stop-color="#000" stop-opacity="0.663"/><stop offset="0.9688" stop-color="#000" stop-opacity="0.700"/><stop offset="0.9844" stop-color="#000" stop-opacity="0.767"/><stop offset="1.0000" stop-color="#000" stop-opacity="0.820"/></linearGradient>
 <linearGradient id="gDiag2" x1="1286.1" y1="514.2" x2="1459.0" y2="320.0" gradientUnits="userSpaceOnUse" spreadMethod="pad"><stop stop-color="#000" offset="0.000" stop-opacity="0.000"/><stop stop-color="#000" offset="0.025" stop-opacity="0.000"/><stop stop-color="#000" offset="0.050" stop-opacity="0.000"/><stop stop-color="#000" offset="0.075" stop-opacity="0.000"/><stop stop-color="#000" offset="0.100" stop-opacity="0.000"/><stop stop-color="#000" offset="0.125" stop-opacity="0.000"/><stop stop-color="#000" offset="0.150" stop-opacity="0.000"/><stop stop-color="#000" offset="0.175" stop-opacity="0.000"/><stop stop-color="#000" offset="0.200" stop-opacity="0.000"/><stop stop-color="#000" offset="0.225" stop-opacity="0.000"/><stop stop-color="#000" offset="0.250" stop-opacity="0.000"/><stop stop-color="#000" offset="0.275" stop-opacity="0.000"/><stop stop-color="#000" offset="0.300" stop-opacity="0.000"/><stop stop-color="#000" offset="0.325" stop-opacity="0.000"/><stop stop-color="#000" offset="0.350" stop-opacity="0.002"/><stop stop-color="#000" offset="0.375" stop-opacity="0.004"/><stop stop-color="#000" offset="0.400" stop-opacity="0.008"/><stop stop-color="#000" offset="0.425" stop-opacity="0.012"/><stop stop-color="#000" offset="0.450" stop-opacity="0.018"/><stop stop-color="#000" offset="0.475" stop-opacity="0.025"/><stop stop-color="#000" offset="0.500" stop-opacity="0.033"/><stop stop-color="#000" offset="0.525" stop-opacity="0.043"/><stop stop-color="#000" offset="0.550" stop-opacity="0.054"/><stop stop-color="#000" offset="0.575" stop-opacity="0.066"/><stop stop-color="#000" offset="0.600" stop-opacity="0.079"/><stop stop-color="#000" offset="0.625" stop-opacity="0.095"/><stop stop-color="#000" offset="0.650" stop-opacity="0.111"/><stop stop-color="#000" offset="0.675" stop-opacity="0.129"/><stop stop-color="#000" offset="0.700" stop-opacity="0.150"/><stop stop-color="#000" offset="0.725" stop-opacity="0.172"/><stop stop-color="#000" offset="0.750" stop-opacity="0.196"/><stop stop-color="#000" offset="0.775" stop-opacity="0.223"/><stop stop-color="#000" offset="0.800" stop-opacity="0.252"/><stop stop-color="#000" offset="0.825" stop-opacity="0.285"/><stop stop-color="#000" offset="0.850" stop-opacity="0.322"/><stop stop-color="#000" offset="0.875" stop-opacity="0.363"/><stop stop-color="#000" offset="0.900" stop-opacity="0.410"/><stop stop-color="#000" offset="0.925" stop-opacity="0.465"/><stop stop-color="#000" offset="0.950" stop-opacity="0.533"/><stop stop-color="#000" offset="0.975" stop-opacity="0.624"/><stop stop-color="#000" offset="1.000" stop-opacity="0.850"/></linearGradient>
 <radialGradient id="gBend" cx="1316" cy="560" r="380" gradientTransform="translate(1316 560) scale(1 1.3) translate(-1316 -560)" gradientUnits="userSpaceOnUse">
  <stop offset="0" stop-color="#c1c1d9"/><stop offset=".1" stop-color="#bbbbd3"/><stop offset=".3" stop-color="#aaaac0"/><stop offset=".5" stop-color="#9e9eb3"/><stop offset=".75" stop-color="#9494a8"/><stop offset="1" stop-color="#8e8ea1"/>
 </radialGradient>
 <linearGradient id="gArchV" x1="0" y1="250" x2="0" y2="335" gradientUnits="userSpaceOnUse"><stop offset="0" stop-opacity=".5"/><stop offset=".18" stop-opacity=".38"/><stop offset=".42" stop-opacity=".2"/><stop offset=".65" stop-opacity=".08"/><stop offset="1" stop-opacity="0"/></linearGradient>
 <clipPath id="cArch"><path d="M893.0 351.0C919.7 272.8 1027.7 221.9 1093.0 286.0L1124.0 314.0C1045.8 301.4 964.1 317.2 893.0 351.0Z"/></clipPath>
 <clipPath id="cTop"><path d="M1093 286L1247.0 424.0C1352.0 379.1 1482.9 359.7 1582.0 430.0L1614.0 458.0L1459.0 320.0C1339.4 202.8 1148.5 190.1 1000.0 257.0C1033.4 251.7 1068.0 263.9 1093.0 286.0Z"/></clipPath>
 <clipPath id="cBend"><path d="M1247.0 424.0C1352.0 379.1 1482.9 359.7 1582.0 430.0L1614.0 458.0C1690.2 527.3 1685.9 645.5 1649.0 734.0C1553.5 634.1 1398.2 643.2 1282.0 696.0C1324.7 609.6 1322.8 492.0 1247.0 424.0Z"/></clipPath>
</defs>
<rect x="542" y="168" width="1378" height="807" fill="url(#bg)"/>
<rect x="542" y="168" width="1378" height="1" fill="#26265a"/>
<g stroke="#fff" stroke-width="1.6" fill="none">
 <path d="M837 463L1227 808M1021 481L1277 708M1204 499L1308 591"/>
</g>
<path d="M837 463L893 351C964.1 317.2 1045.8 301.4 1124.0 314.0L1247.0 424.0L1245.0 422.0L1204.0 499.0L1021.0 481.0Z" fill="#8f8ea0"/>
<path d="M1228 808L1282 696C1398.2 643.2 1553.5 634.1 1649.0 733.0L1593.0 845.0L1410.0 828.0Z" fill="#8f8ea0"/>
<g clip-path="url(#cArch)">
 <path d="M893.0 351.0C919.7 272.8 1027.7 221.9 1093.0 286.0L1124.0 314.0C1045.8 301.4 964.1 317.2 893.0 351.0Z" fill="#8f8ea0"/>
 <rect x="880" y="245" width="260" height="120" fill="url(#gArchV)"/>
 <g filter="url(#bl3)"><g fill="none" stroke="#000" stroke-linejoin="round" stroke-linecap="round" ><path d="M893.0 351.0C919.7 272.8 1027.7 221.9 1093.0 286.0" stroke-width="60.0" stroke-opacity="0.004"/><path d="M893.0 351.0C919.7 272.8 1027.7 221.9 1093.0 286.0" stroke-width="47.8" stroke-opacity="0.028"/><path d="M893.0 351.0C919.7 272.8 1027.7 221.9 1093.0 286.0" stroke-width="36.8" stroke-opacity="0.052"/><path d="M893.0 351.0C919.7 272.8 1027.7 221.9 1093.0 286.0" stroke-width="27.0" stroke-opacity="0.076"/><path d="M893.0 351.0C919.7 272.8 1027.7 221.9 1093.0 286.0" stroke-width="18.5" stroke-opacity="0.102"/><path d="M893.0 351.0C919.7 272.8 1027.7 221.9 1093.0 286.0" stroke-width="11.3" stroke-opacity="0.134"/><path d="M893.0 351.0C919.7 272.8 1027.7 221.9 1093.0 286.0" stroke-width="5.7" stroke-opacity="0.177"/><path d="M893.0 351.0C919.7 272.8 1027.7 221.9 1093.0 286.0" stroke-width="1.7" stroke-opacity="0.228"/></g></g>
</g>
<g clip-path="url(#cTop)">
 <path d="M1093 286L1247.0 424.0C1352.0 379.1 1482.9 359.7 1582.0 430.0L1614.0 458.0L1459.0 320.0C1339.4 202.8 1148.5 190.1 1000.0 257.0C1033.4 251.7 1068.0 263.9 1093.0 286.0Z" fill="#9292a4"/>
 <g style="mix-blend-mode:multiply">
  <rect x="542" y="168" width="1378" height="807" fill="#fff"/>
  <rect x="542" y="168" width="1378" height="807" fill="url(#gDiag)"/>
  <g style="mix-blend-mode:darken"><rect x="542" y="168" width="1378" height="807" fill="#fff"/><g filter="url(#bl3)"><g fill="none" stroke="#000" stroke-linejoin="round" stroke-linecap="round" ><path d="M950 280L1000 257C1148.5 190.1 1339.4 202.8 1459.3 320.3L1614 458L1700 534" stroke-width="200.0" stroke-opacity="0.001"/><path d="M950 280L1000 257C1148.5 190.1 1339.4 202.8 1459.3 320.3L1614 458L1700 534" stroke-width="176.3" stroke-opacity="0.012"/><path d="M950 280L1000 257C1148.5 190.1 1339.4 202.8 1459.3 320.3L1614 458L1700 534" stroke-width="153.9" stroke-opacity="0.022"/><path d="M950 280L1000 257C1148.5 190.1 1339.4 202.8 1459.3 320.3L1614 458L1700 534" stroke-width="132.7" stroke-opacity="0.032"/><path d="M950 280L1000 257C1148.5 190.1 1339.4 202.8 1459.3 320.3L1614 458L1700 534" stroke-width="112.9" stroke-opacity="0.042"/><path d="M950 280L1000 257C1148.5 190.1 1339.4 202.8 1459.3 320.3L1614 458L1700 534" stroke-width="94.4" stroke-opacity="0.052"/><path d="M950 280L1000 257C1148.5 190.1 1339.4 202.8 1459.3 320.3L1614 458L1700 534" stroke-width="77.2" stroke-opacity="0.064"/><path d="M950 280L1000 257C1148.5 190.1 1339.4 202.8 1459.3 320.3L1614 458L1700 534" stroke-width="61.6" stroke-opacity="0.077"/><path d="M950 280L1000 257C1148.5 190.1 1339.4 202.8 1459.3 320.3L1614 458L1700 534" stroke-width="47.4" stroke-opacity="0.092"/><path d="M950 280L1000 257C1148.5 190.1 1339.4 202.8 1459.3 320.3L1614 458L1700 534" stroke-width="34.7" stroke-opacity="0.110"/><path d="M950 280L1000 257C1148.5 190.1 1339.4 202.8 1459.3 320.3L1614 458L1700 534" stroke-width="23.8" stroke-opacity="0.134"/><path d="M950 280L1000 257C1148.5 190.1 1339.4 202.8 1459.3 320.3L1614 458L1700 534" stroke-width="14.6" stroke-opacity="0.167"/><path d="M950 280L1000 257C1148.5 190.1 1339.4 202.8 1459.3 320.3L1614 458L1700 534" stroke-width="7.3" stroke-opacity="0.217"/><path d="M950 280L1000 257C1148.5 190.1 1339.4 202.8 1459.3 320.3L1614 458L1700 534" stroke-width="2.3" stroke-opacity="0.283"/></g></g></g>
 </g>
</g>
<g clip-path="url(#cBend)">
 <path d="M1247.0 424.0C1352.0 379.1 1482.9 359.7 1582.0 430.0L1614.0 458.0C1690.2 527.3 1685.9 645.5 1649.0 734.0C1553.5 634.1 1398.2 643.2 1282.0 696.0C1324.7 609.6 1322.8 492.0 1247.0 424.0Z" fill="url(#gBend)"/>
 <g style="mix-blend-mode:multiply">
  <rect x="542" y="168" width="1378" height="807" fill="#fff"/>
  <rect x="542" y="168" width="1378" height="807" fill="url(#gDiag2)"/>
  <g style="mix-blend-mode:darken"><rect x="542" y="168" width="1378" height="807" fill="#fff"/><g filter="url(#bl3)"><g fill="none" stroke="#000" stroke-linejoin="round" stroke-linecap="round" ><path d="M1459 320L1614 458C1690.2 527.3 1685.9 645.5 1649.0 734.0L1630 790" stroke-width="80.0" stroke-opacity="0.002"/><path d="M1459 320L1614 458C1690.2 527.3 1685.9 645.5 1649.0 734.0L1630 790" stroke-width="66.9" stroke-opacity="0.014"/><path d="M1459 320L1614 458C1690.2 527.3 1685.9 645.5 1649.0 734.0L1630 790" stroke-width="54.7" stroke-opacity="0.027"/><path d="M1459 320L1614 458C1690.2 527.3 1685.9 645.5 1649.0 734.0L1630 790" stroke-width="43.6" stroke-opacity="0.039"/><path d="M1459 320L1614 458C1690.2 527.3 1685.9 645.5 1649.0 734.0L1630 790" stroke-width="33.6" stroke-opacity="0.050"/><path d="M1459 320L1614 458C1690.2 527.3 1685.9 645.5 1649.0 734.0L1630 790" stroke-width="24.6" stroke-opacity="0.063"/><path d="M1459 320L1614 458C1690.2 527.3 1685.9 645.5 1649.0 734.0L1630 790" stroke-width="16.8" stroke-opacity="0.077"/><path d="M1459 320L1614 458C1690.2 527.3 1685.9 645.5 1649.0 734.0L1630 790" stroke-width="10.3" stroke-opacity="0.093"/><path d="M1459 320L1614 458C1690.2 527.3 1685.9 645.5 1649.0 734.0L1630 790" stroke-width="5.2" stroke-opacity="0.113"/><path d="M1459 320L1614 458C1690.2 527.3 1685.9 645.5 1649.0 734.0L1630 790" stroke-width="1.6" stroke-opacity="0.133"/></g></g></g>
 </g>
</g>
<!-- black edges -->
<g stroke="#151515" stroke-width="2" fill="none" stroke-linejoin="round">
 <path d="M837 463L1021 481L1204 499"/>
 <path d="M1228 808L1410 828L1593 845"/>
 <path d="M893.0 351.0C964.1 317.2 1045.8 301.4 1124.0 314.0"/>
 <path d="M1093.0 286.0C1144.9 265.6 1199.0 246.2 1255.6 246.0C1309.1 243.2 1364.8 254.1 1411.0 282.0"/>
 <path d="M1247.0 424.0C1352.0 379.1 1482.9 359.7 1582.0 430.0"/>
 <path d="M1282.0 696.0C1398.2 643.2 1553.5 634.1 1649.0 733.0"/>
</g>
<!-- silhouettes dotted -->
<g stroke="#151515" stroke-width="2" fill="none">
 <path d="M893.0 351.0C919.7 272.8 1027.7 221.9 1093.0 286.0"/><path d="M1093 286L1247 424"/><path d="M1459 320L1614 458"/><path d="M1614.0 458.0C1690.2 527.3 1685.9 645.5 1649.0 734.0"/><path d="M1247.0 424.0C1322.8 492.0 1324.7 609.6 1282.0 696.0"/><path d="M1282 696L1228 808"/>
</g>
<g stroke="#fff" stroke-width="1.6" fill="none" stroke-dasharray="3 3">
 <path d="M893.0 351.0C919.7 272.8 1027.7 221.9 1093.0 286.0"/><path d="M1093 286L1247 424"/><path d="M1459 320L1614 458"/><path d="M1614.0 458.0C1690.2 527.3 1685.9 645.5 1649.0 734.0"/><path d="M1247.0 424.0C1322.8 492.0 1324.7 609.6 1282.0 696.0"/><path d="M1282 696L1228 808"/>
</g>
<!-- white edges -->
<g stroke="#fff" stroke-width="1.8" fill="none">
 <path d="M837 463L893 351M1021 481L1109 302M1204 499L1245.5 422M1649 733L1593 845"/>
 <path d="M1224.0 217.0C1229.3 217.6 1244.4 217.3 1255.6 220.4C1266.8 223.5 1282.8 230.8 1291.0 235.4C1299.2 240.0 1302.7 245.7 1305.0 247.8L1459.4 384.6C1506.8 421.2 1520.2 484.9 1519.7 541.7C1517.1 581.4 1512.9 622.0 1494.5 658.0L1410.0 828.0"/>
</g>
<g fill="#fff">
 <rect x="835.5" y="461.5" width="3" height="3"/><rect x="1019.5" y="479.5" width="3" height="3"/><rect x="1202.5" y="497.5" width="3" height="3"/>
 <rect x="891.5" y="349.5" width="3" height="3"/><rect x="1226.5" y="806.5" width="3" height="3"/><rect x="1408.5" y="826.5" width="3" height="3"/><rect x="1591.5" y="843.5" width="3" height="3"/>
 <rect x="1647.5" y="731.5" width="3" height="3"/><rect x="1280.5" y="694.5" width="3" height="3"/><rect x="1245.5" y="422.5" width="3" height="3"/>
</g>
<rect x="1091" y="284" width="4" height="4" fill="#151515" stroke="#fff" stroke-width="1.2"/>
</svg>
<!-- navcube -->
<svg style="left:1776px;top:170px" width="144" height="140" viewBox="1776 170 144 140">
 <g fill="#6a6a95" stroke="#2b2b45" stroke-width=".8">
  <path d="M1836.4 186.9L1848 174.5L1859.7 186.9z"/>
  <path d="M1836.4 292.5L1859.7 292.5L1848 305.5z"/>
  <path d="M1782.6 240L1795.6 228.3L1795.6 251.7z"/>
  <path d="M1900.6 228.3L1913.5 240L1900.6 251.7z"/>
  <circle cx="1905" cy="182.3" r="6.5"/>
  <path d="M1830 181.5C1821 183 1812 188 1805.5 195L1801 192L1799 209L1813 204L1809.5 200.5C1815 195 1822 190.5 1830 189Z"/>
  <path d="M 1866 181.5 C 1875 183 1884 188 1890.5 195 L 1895 192 L 1897 209 L 1883 204 L 1886.5 200.5 C 1881 195 1874 190.5 1866 189 Z"/>
  <path d="M1882.5 282l10-4.5 10 3v12l-10 4-10-3.5z"/>
  <path d="M1882.5 282l10 3.5 10-4.5M1892.5 285.5v11.5" fill="none"/>
  <path d="M1818.9 208.9L1835.7 199.8L1860.4 201.1L1887.6 224.4L1890.2 240L1877.2 271.1L1857.8 280.2L1829.3 273.7L1808.5 255.6L1805.9 237.4z" fill="#6c6c97"/>
 </g>
 <g fill="none" stroke="#2f2f48" stroke-width=".7">
  <path d="M1835.7 199.8L1846 221.9L1856 221L1864 226L1864 234.5L1856 239L1846 237L1843 229zM1818.9 208.9L1840 222M1864 226L1887.6 224.4M1864 234.5L1890.2 238M1846 237L1827 273M1856 239L1833 276M1808.5 255.6L1827 265L1833 276M1828 265L1841 262L1846 277"/>
 </g>
 <text x="1812" y="238" font-family="Liberation Sans" font-size="10" fill="#4a4a66" transform="rotate(28 1820 235)">LEFT</text>
 <text x="1848" y="260" font-family="Liberation Sans" font-size="9.5" fill="#4a4a66" transform="rotate(-8 1860 256)">FRONT</text>
 <text x="1852" y="214" font-family="Liberation Sans" font-size="7" fill="#4a4a66" transform="rotate(20 1858 212)">TOP</text>
 <path d="M1830 284L1800 258.8" stroke="#1fa01f" stroke-width="1.6"/>
 <path d="M1830 284L1865 288" stroke="#b01f1f" stroke-width="1.8"/>
 <path d="M1830 284L1851 242" stroke="#1f1fd0" stroke-width="1.6"/>
</svg>
<!-- axis indicator -->
<svg style="left:1860px;top:895px" width="50" height="45" viewBox="1860 895 50 45">
 <path d="M1880 933.7L1891 911" stroke="#2020b0" stroke-width="1.6"/>
 <path d="M1892 908.5l-1 7-4.5-2.5z" fill="#2020b0"/>
 <path d="M1880 933.7L1869.5 924" stroke="#19a019" stroke-width="1.6"/>
 <path d="M1867.5 922l3 6.5 3-3.5z" fill="#19a019"/>
 <path d="M1880 934L1895 934.8" stroke="#a01f1f" stroke-width="1.6"/>
 <path d="M1896 935l-6-2.5v5z" fill="#a01f1f"/>
 <text x="1893.5" y="907.5" font-family="Liberation Sans" font-size="8.5" fill="#000">Z</text>
 <text x="1866.5" y="920.5" font-family="Liberation Sans" font-size="8.5" fill="#000">Y</text>
 <text x="1896.5" y="935.5" font-family="Liberation Sans" font-size="8.5" fill="#000">X</text>
</svg>
<!-- doc tabs -->
<div class="a" style="left:542px;top:974px;width:1378px;height:31px;background:#eff0f1"></div>
<div class="a" style="left:542px;top:974px;width:1378px;height:1px;background:#f6f6f7"></div>
<div class="a" style="left:772px;top:975px;width:1148px;height:1px;background:#c4c6c8"></div>
<div class="a" style="left:542px;top:975px;width:97px;height:27px;background:linear-gradient(#dedfe1,#d9dadc);border:1px solid #c0c2c4;border-radius:0 0 3px 3px"></div>
<div class="a" style="left:638px;top:975px;width:135px;height:30px;background:#f7f7f8;border:1px solid #bdbfc1;border-top:none;border-radius:0 0 3px 3px"></div>
<div class="t" style="left:574px;top:983px">Start</div>
<div class="t" style="left:670px;top:984px">3sketch : 1*</div>
<svg style="left:540px;top:975px" width="240" height="30" viewBox="540 975 240 30">
 <use href="#fc" x="554.5" y="980" width="14.7" height="16.5"/>
 <circle cx="615" cy="989.5" r="6" fill="#da4453"/>
 <path d="M612.3 986.8l5.4 5.4M617.7 986.8l-5.4 5.4" stroke="#fff" stroke-width="1.1"/>
 <circle cx="749.8" cy="989.6" r="6" fill="#da4453"/>
 <path d="M747.1 986.9l5.4 5.4M752.5 986.9l-5.4 5.4" stroke="#fff" stroke-width="1.1"/>
 <path d="M652.5 981.5h8l2.5 2.5v12.5h-10.5z" fill="#f5f5f5" stroke="#777" stroke-width=".8"/>
 <path d="M654 989l4-2 3 2v5l-3 2-4-2z" fill="#2f6ab0" stroke="#183a66" stroke-width=".5"/>
 <circle cx="659.5" cy="987" r="2.6" fill="#d42a2a"/>
</svg>
<!-- status bar -->
<div class="t" style="left:2px;top:1016px;font-size:12.5px">Valid, Internal name: Surface002</div>
<svg style="left:1560px;top:1008px" width="360" height="28" viewBox="1560 1008 360 28">
 <rect x="1568" y="1014.5" width="13.5" height="13" fill="#e8cf2a" stroke="#b9a21a" stroke-width=".6"/>
 <path d="M1568.5 1015l6.5 6 6.5-6" stroke="#c9b21f" stroke-width=".8" fill="none"/>
 <path d="M1634 1019.5h8l-4 3.5z" fill="#6e7072"/>
 <rect x="1663.5" y="1014.5" width="13" height="13" rx="2" fill="none" stroke="#232629" stroke-width="1.3"/>
 <path d="M1664 1023.5h12M1670 1023.5v4" stroke="#232629" stroke-width="1.2"/>
 <path d="M1742 1019.5h8l-4 3.5z" fill="#6e7072"/>
 <path d="M1907 1019.5h8l-4 3.5z" fill="#6e7072"/>
</svg>
<div class="t" style="left:1586px;top:1015px">4</div>
<div class="t" style="left:1680px;top:1015px">Touchpad</div>
<div class="t" style="left:1764px;top:1015px;font-size:12.5px">208.17 mm x 121.76 mm</div>
<!-- taskbar -->
<div class="a" style="left:0;top:1036px;width:1920px;height:44px;background:#2a2d31"></div>
<div class="a" style="left:305px;top:1036px;width:50px;height:44px;background:#2e6482"></div>
<div class="a" style="left:305px;top:1036px;width:50px;height:3px;background:#3d9de3"></div>
<svg style="left:0;top:1036px" width="1920" height="44" viewBox="0 1036 1920 44">
 <circle cx="15.9" cy="1047.5" r="1.9" fill="#fcfcfc"/>
 <circle cx="12.4" cy="1057.5" r="2.7" fill="#fcfcfc"/>
 <circle cx="18.9" cy="1067" r="3.2" fill="#fcfcfc"/>
 <path d="M25 1047.5l7.5 6-7.5 6" stroke="#fcfcfc" stroke-width="3.6" fill="none"/>
 <rect x="56" y="1044" width="28" height="28" fill="#35383c"/>
 <path d="M56 1044h28v28z" fill="#2b2d30" opacity=".6"/>
 <path d="M59 1053.5h21M59 1062h21" stroke="#4a4d51" stroke-width="1.6"/>
 <path d="M59 1053.5h17M59 1062h7" stroke="#3daee9" stroke-width="1.6"/>
 <circle cx="76" cy="1053.5" r="2.5" fill="#fcfcfc"/>
 <circle cx="66" cy="1062" r="2.5" fill="#fcfcfc"/>
 <path d="M110 1050h24v22h-24z" fill="#1d99f3"/>
 <path d="M117 1050v-2a5 5 0 0 1 10 0v2" stroke="#1d99f3" stroke-width="1.4" fill="none"/>
 <path d="M120 1057l4 3-4 3" stroke="#e0f0ff" stroke-width="1.6" fill="none"/>
 <path d="M159 1044h10l2 2h18v25h-30z" fill="#2f7fc8"/>
 <rect x="160" y="1049" width="28" height="4" fill="#f0f2f4"/>
 <path d="M159 1053h30v18h-30z" fill="#3fa0e8"/>
 <circle cx="226" cy="1058" r="14" fill="#ff7a1a"/>
 <path d="M226 1044c9 0 15 7 15 14 0 9-7 15-15 15-8 0-14-6-15-13 3 6 9 9 15 8 7-1 11-8 8-14-1 3-4 4-6 4z" fill="#ff3d5a" opacity=".7"/>
 <path d="M232 1042c6 4 9 10 8 17l-6-7z" fill="#ffd43a"/>
 <circle cx="228" cy="1059" r="6.5" fill="#7a3ccf"/>
 <path d="M214 1052c2-3 6-5 10-4-3 1-4 3-4 5" fill="#ffc23a"/>
 <rect x="262" y="1044" width="31.5" height="22" fill="#3c3f44"/>
 <path d="M264 1046h27.5v18h-27.5z" fill="#5fc9c8"/>
 <path d="M277 1046h14.5v18h-10z" fill="#c0589a"/>
 <path d="M264 1056l10-2 5 10h-15z" fill="#4a5058"/>
 <rect x="272" y="1051" width="12" height="9" fill="#f4f4f4"/>
 <circle cx="279" cy="1055.5" r="2.8" fill="none" stroke="#e07070"/>
 <path d="M275 1068.5h10" stroke="#c9cbcd" stroke-width="1.6"/>
 <use href="#fc" x="316.6" y="1042" width="27" height="32"/>
 <!-- tray -->
 <path d="M1531 1052.5l2-2.5M1543 1052.5l-2-2.5" stroke="#fcfcfc" stroke-width="1.2"/>
 <path d="M1532.5 1062c1.5-1.5 1.5-3 1.5-5 0-2.5 1.5-4.5 3-4.5s3 2 3 4.5c0 2 0 3.5 1.5 5z" fill="none" stroke="#fcfcfc" stroke-width="1.3"/>
 <circle cx="1537" cy="1064.5" r="1.4" fill="#fcfcfc"/>
 <circle cx="1597" cy="1058" r="7.3" fill="none" stroke="#fcfcfc" stroke-width="1.3"/>
 <path d="M1597 1053l3.5 3.5h-2v4h-3v-4h-2z" fill="#fcfcfc"/>
 <circle cx="1602" cy="1063.5" r="2.6" fill="#da4453"/>
 <rect x="1620.5" y="1052.5" width="13" height="13" fill="none" stroke="#fcfcfc" stroke-width="1.2"/>
 <rect x="1623" y="1050.5" width="8" height="3" fill="#fcfcfc"/>
 <path d="M1623 1057h8M1623 1059.5h8M1623 1062h5" stroke="#fcfcfc" stroke-width=".9"/>
 <path d="M1654 1056a3.5 3.5 0 1 1 6 0c-1 1.5-1 2.5-1 4h-4c0-1.5 0-2.5-1-4z" fill="#fcfcfc"/>
 <path d="M1655.5 1062.5h3M1656 1064.5h2" stroke="#fcfcfc" stroke-width="1.1"/>
 <path d="M1679 1055h3l5-4v15l-5-4h-3z" fill="#fcfcfc"/>
 <path d="M1689.5 1055a4 4 0 0 1 0 7M1692 1052.5a7.5 7.5 0 0 1 0 12" stroke="#fcfcfc" stroke-width="1.2" fill="none"/>
 <rect x="1707.5" y="1053.5" width="18" height="10" fill="none" stroke="#fcfcfc" stroke-width="1.3"/>
 <rect x="1725.5" y="1056" width="1.5" height="5" fill="#fcfcfc"/>
 <path d="M1710 1056h3v5.5h-4z" fill="#fcfcfc"/>
 <path d="M1738 1055a13 13 0 0 1 18 0M1741 1058a9 9 0 0 1 12 0M1744 1061a4.5 4.5 0 0 1 6 0" stroke="#fcfcfc" stroke-width="1.2" fill="none"/>
 <circle cx="1747" cy="1064.5" r="1.3" fill="#fcfcfc"/>
 <path d="M1769 1062l6-6 6 6" stroke="#fcfcfc" stroke-width="1.3" fill="none"/>
 <rect x="1886" y="1050.5" width="15" height="15" fill="none" stroke="#fcfcfc" stroke-width="1.2"/>
 <path d="M1886 1063.5h15" stroke="#fcfcfc" stroke-width="1.5"/>
</svg>
<div class="t" style="left:1559px;top:1052px;color:#3daee9;font-weight:700;font-size:12px">EN</div>
<div class="t" style="left:1809px;top:1045px;color:#dde6ef;font-size:15px;line-height:15px">10:29</div>
<div class="t" style="left:1794px;top:1060px;color:#dde6ef;font-size:13.6px">22/08/2025</div>
</body></html>
